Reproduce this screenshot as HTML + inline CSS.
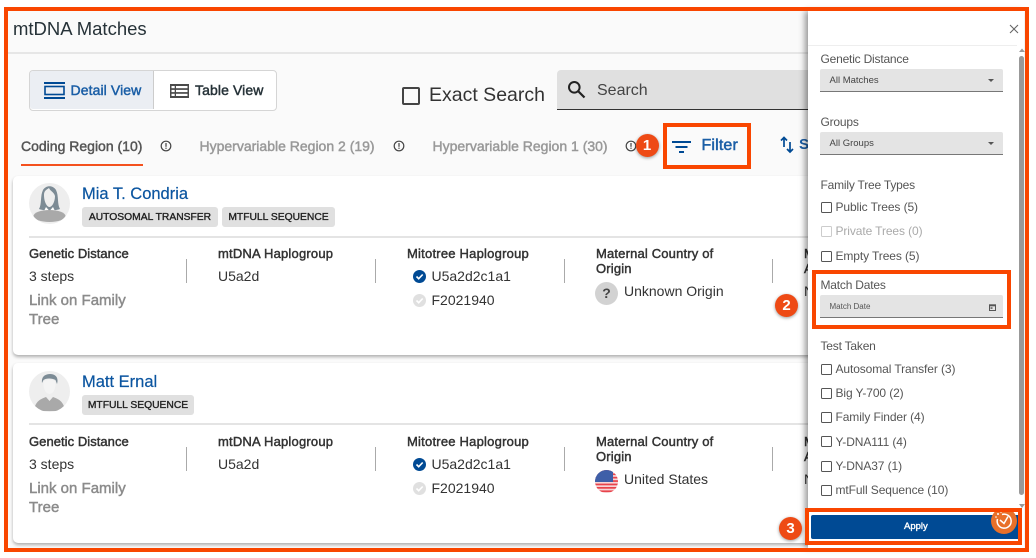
<!DOCTYPE html>
<html><head><meta charset="utf-8"><style>
html,body{margin:0;padding:0;background:#fff}
#p{position:relative;width:1036px;height:558px;overflow:hidden;background:#fff;font-family:"Liberation Sans",sans-serif;color:#212121}
#p div,#p svg,#p span.t{position:absolute}
.t{white-space:nowrap;line-height:1}
.lbl{font-size:13px;font-weight:400;color:#333;-webkit-text-stroke:.45px #333}
.val{font-size:14px;color:#333}
.sep{width:1px;height:24px;background:#aaa}
.chip{background:#e0e0e0;border-radius:3px;height:20px;font-size:10.3px;line-height:22px;color:#222;text-align:center;-webkit-text-stroke:.35px #222}
.card{background:#fff;border-radius:5px;box-shadow:0 2px 3px rgba(0,0,0,.3)}
.ph{font-size:12px;color:#555;letter-spacing:-.2px}
.cb{width:9px;height:9px;border:1.4px solid #555;border-radius:1.5px;background:#fff}
.ct{font-size:12px;color:#555;letter-spacing:-.1px}
.or{position:absolute;border:4px solid #f94600;box-sizing:border-box}
.num{width:23px;height:23px;border-radius:50%;background:#ee4a15;color:#fff;font-weight:700;font-size:15px;line-height:23px;text-align:center;box-shadow:0 1px 3px rgba(0,0,0,.4)}
.sel{left:820px;width:183px;height:22px;background:#e4e4e4;border-bottom:1.5px solid #777;border-radius:2px 2px 0 0}
.lnk{left:29px;font-size:15px;color:#8b8b8b;line-height:19px;white-space:normal;width:110px;-webkit-text-stroke:.45px #8b8b8b}
.tab{font-size:14px;-webkit-text-stroke:.45px currentColor}
</style></head><body><div id="p">

<div style="left:8px;top:11px;width:1016px;height:537px;background:#fafafa"></div>
<span class="t" style="left:13px;top:20px;font-size:18.5px;color:#263238">mtDNA Matches</span>
<div style="left:8px;top:52px;width:800px;height:2px;background:#e6e6e6"></div>

<!-- toggle -->
<div style="left:29px;top:70px;width:246px;height:39px;background:#fff;border:1px solid #d5d5d5;border-radius:4px"></div>
<div style="left:30px;top:71px;width:123px;height:38px;background:#ebeef3;border-right:1px solid #ccc;border-radius:3px 0 0 3px"></div>
<svg style="left:44px;top:82px" width="21" height="17" viewBox="0 0 21 17"><rect x="0" y="0" width="21" height="2" fill="#004a94"/><rect x="1" y="4.5" width="19" height="8" fill="none" stroke="#004a94" stroke-width="1.6"/><rect x="0" y="15" width="21" height="2" fill="#004a94"/></svg>
<span class="t" style="left:70.5px;top:83px;font-size:14px;color:#1a5ea6;letter-spacing:.1px;-webkit-text-stroke:.45px #1a5ea6">Detail View</span>
<svg style="left:170px;top:84px" width="19" height="14" viewBox="0 0 19 14"><rect width="19" height="14" fill="#4a4a4a"/><g fill="#fff"><rect x="6" y="2" width="11.5" height="2.2"/><rect x="6" y="5.9" width="11.5" height="2.2"/><rect x="6" y="9.8" width="11.5" height="2.2"/><rect x="1.5" y="2" width="3.2" height="2.2"/><rect x="1.5" y="5.9" width="3.2" height="2.2"/><rect x="1.5" y="9.8" width="3.2" height="2.2"/></g></svg>
<span class="t" style="left:195px;top:83px;font-size:14px;color:#263238;letter-spacing:.1px;-webkit-text-stroke:.45px #263238">Table View</span>

<!-- exact search -->
<div style="left:402px;top:87px;width:14px;height:14px;border:2px solid #444;border-radius:2px"></div>
<span class="t" style="left:429px;top:86px;font-size:19.5px;color:#333">Exact Search</span>
<div style="left:557px;top:70px;width:251px;height:39px;background:#e0e0e0;border-bottom:1px solid #333;border-radius:4px 0 0 0"></div>
<svg style="left:567px;top:80px" width="19" height="19" viewBox="0 0 19 19"><circle cx="7.3" cy="7.3" r="5.3" fill="none" stroke="#222" stroke-width="2"/><path d="M11.5 11.5L17.5 17.5" stroke="#222" stroke-width="2.2"/></svg>
<span class="t" style="left:597px;top:83px;font-size:16px;color:#444">Search</span>

<!-- tabs -->
<span class="t tab" style="left:21px;top:139px;color:#555">Coding Region (10)</span>
<div style="left:21px;top:164px;width:122px;height:2px;background:#f4511e"></div>
<span class="t tab" style="left:199.500px;top:139px;color:#999">Hypervariable Region 2 (19)</span>
<span class="t tab" style="left:432.500px;top:139px;color:#999">Hypervariable Region 1 (30)</span>
<svg style="left:160px;top:140px" width="12" height="12" viewBox="0 0 12 12"><circle cx="6" cy="6" r="4.8" fill="none" stroke="#444" stroke-width="1.2"/><rect x="5.4" y="3" width="1.2" height="3.8" fill="#444"/><rect x="5.4" y="7.6" width="1.2" height="1.3" fill="#444"/></svg>
<svg style="left:393px;top:140px" width="12" height="12" viewBox="0 0 12 12"><circle cx="6" cy="6" r="4.8" fill="none" stroke="#444" stroke-width="1.2"/><rect x="5.4" y="3" width="1.2" height="3.8" fill="#444"/><rect x="5.4" y="7.6" width="1.2" height="1.3" fill="#444"/></svg>
<svg style="left:625px;top:140px" width="12" height="12" viewBox="0 0 12 12"><circle cx="6" cy="6" r="4.8" fill="none" stroke="#444" stroke-width="1.2"/><rect x="5.4" y="3" width="1.2" height="3.8" fill="#444"/><rect x="5.4" y="7.6" width="1.2" height="1.3" fill="#444"/></svg>

<!-- filter + sort -->
<svg style="left:672px;top:141px" width="19" height="12" viewBox="0 0 19 12"><rect x="0" y="0" width="19" height="2" fill="#004a94"/><rect x="3.5" y="5" width="12" height="2" fill="#004a94"/><rect x="7" y="10" width="5" height="2" fill="#004a94"/></svg>
<span class="t" style="left:701.500px;top:138px;font-size:16px;color:#1a5ea6;letter-spacing:.15px;-webkit-text-stroke:.5px #1a5ea6">Filter</span>
<svg style="left:780px;top:136px" width="14" height="18" viewBox="0 0 14 18"><path d="M4 1.5V11M1 4.5L4 1.5L7 4.5M10 6V16M7 13L10 16L13 13" fill="none" stroke="#004a94" stroke-width="1.7"/></svg>
<span class="t" style="left:799px;top:137px;font-size:15px;font-weight:700;color:#1a5ea6">S</span>

<!-- card 1 -->
<div class="card" style="left:13px;top:176px;width:810px;height:179px"></div>
<div style="left:29px;top:183px;width:41px;height:41px;border-radius:50%;background:#eee;overflow:hidden">
<svg style="left:0;top:0" width="41" height="41" viewBox="0 0 41 41"><path d="M10 26C13 21 11 13 14 7C17 2 24 2 27 7C30 13 28 21 31 26C26 28 15 28 10 26Z" fill="#7c8b95"/><path d="M15 12C15 8 17 7 20 5C21 8 25 9 26 13C26 19 23 24 20.500 24C18 24 15 19 15 12Z" fill="#eee"/><path d="M17 24L20.500 28L24 24L26 28H15Z" fill="#fff"/><ellipse cx="20.500" cy="33" rx="16" ry="6" fill="#a9a9a9"/></svg></div>
<span class="t" style="left:82px;top:186px;font-size:16.500px;color:#0b55a0;-webkit-text-stroke:.2px #0b55a0">Mia T. Condria</span>
<div class="chip" style="left:82px;top:207px;width:136px">AUTOSOMAL TRANSFER</div>
<div class="chip" style="left:222px;top:207px;width:113px">MTFULL SEQUENCE</div>
<div style="left:29px;top:236px;width:780px;height:2px;background:#e4e4e4"></div>
<span class="t lbl" style="left:29px;top:247px;letter-spacing:.05px">Genetic Distance</span>
<span class="t val" style="left:29px;top:269px">3 steps</span>
<span class="t lnk" style="top:291px">Link on Family Tree</span>
<div class="sep" style="left:186px;top:259px"></div>
<span class="t lbl" style="left:218px;top:247px;letter-spacing:.2px">mtDNA Haplogroup</span>
<span class="t val" style="left:218px;top:269px">U5a2d</span>
<div class="sep" style="left:375px;top:259px"></div>
<span class="t lbl" style="left:407px;top:247px;letter-spacing:.22px">Mitotree Haplogroup</span>
<svg style="left:413px;top:270px" width="13" height="13" viewBox="0 0 13 13"><circle cx="6.500" cy="6.500" r="6.500" fill="#004a94"/><path d="M3.500 6.500L5.700 8.700L9.700 4.500" fill="none" stroke="#fff" stroke-width="1.6"/></svg>
<span class="t val" style="left:431.500px;top:269px">U5a2d2c1a1</span>
<svg style="left:413px;top:294px" width="13" height="13" viewBox="0 0 13 13"><circle cx="6.500" cy="6.500" r="6.500" fill="#e0e0e0"/><path d="M3.500 6.500L5.700 8.700L9.700 4.500" fill="none" stroke="#fff" stroke-width="1.6"/></svg>
<span class="t val" style="left:431.500px;top:293px">F2021940</span>
<div class="sep" style="left:564px;top:259px"></div>
<span class="t lbl" style="left:596px;top:247px;letter-spacing:.17px">Maternal Country of</span>
<span class="t lbl" style="left:596px;top:262px;letter-spacing:.17px">Origin</span>
<div style="left:595px;top:282px;width:23px;height:23px;border-radius:50%;background:#d2d2d2;color:#444;font-size:14px;font-weight:700;line-height:23px;text-align:center">?</div>
<span class="t val" style="left:624px;top:284px">Unknown Origin</span>
<div class="sep" style="left:772px;top:259px"></div>
<span class="t lbl" style="left:804px;top:247px">M</span>
<span class="t lbl" style="left:804px;top:262px">A</span>
<span class="t val" style="left:804px;top:284px">N</span>

<!-- card 2 -->
<div class="card" style="left:13px;top:363px;width:810px;height:180px"></div>
<div style="left:29px;top:371px;width:41px;height:41px;border-radius:50%;background:#eee;overflow:hidden">
<svg style="left:0;top:0" width="41" height="41" viewBox="0 0 41 41"><path d="M13 12C12 5 17 3 21 3C26 3 30 6 28 13L26.500 9C23 7 17 7 14.500 9Z" fill="#7c8b95"/><path d="M14.500 11C15 8 26 8 26.500 11C27 18 24 23 20.500 23C17 23 14 18 14.500 11Z" fill="#f4f4f4"/><path d="M5 40C6 30 12 28 17 26L20.500 30L24 26C29 28 35 30 36 40Z" fill="#a9a9a9"/></svg></div>
<span class="t" style="left:82px;top:374px;font-size:16.500px;color:#0b55a0;-webkit-text-stroke:.2px #0b55a0">Matt Ernal</span>
<div class="chip" style="left:82px;top:395px;width:112px">MTFULL SEQUENCE</div>
<div style="left:29px;top:423px;width:780px;height:2px;background:#e4e4e4"></div>
<span class="t lbl" style="left:29px;top:435px;letter-spacing:.05px">Genetic Distance</span>
<span class="t val" style="left:29px;top:457px">3 steps</span>
<span class="t lnk" style="top:479px">Link on Family Tree</span>
<div class="sep" style="left:186px;top:447px"></div>
<span class="t lbl" style="left:218px;top:435px;letter-spacing:.2px">mtDNA Haplogroup</span>
<span class="t val" style="left:218px;top:457px">U5a2d</span>
<div class="sep" style="left:375px;top:447px"></div>
<span class="t lbl" style="left:407px;top:435px;letter-spacing:.22px">Mitotree Haplogroup</span>
<svg style="left:413px;top:458px" width="13" height="13" viewBox="0 0 13 13"><circle cx="6.500" cy="6.500" r="6.500" fill="#004a94"/><path d="M3.500 6.500L5.700 8.700L9.700 4.500" fill="none" stroke="#fff" stroke-width="1.6"/></svg>
<span class="t val" style="left:431.500px;top:457px">U5a2d2c1a1</span>
<svg style="left:413px;top:482px" width="13" height="13" viewBox="0 0 13 13"><circle cx="6.500" cy="6.500" r="6.500" fill="#e0e0e0"/><path d="M3.500 6.500L5.700 8.700L9.700 4.500" fill="none" stroke="#fff" stroke-width="1.6"/></svg>
<span class="t val" style="left:431.500px;top:481px">F2021940</span>
<div class="sep" style="left:564px;top:447px"></div>
<span class="t lbl" style="left:596px;top:435px;letter-spacing:.17px">Maternal Country of</span>
<span class="t lbl" style="left:596px;top:450px;letter-spacing:.17px">Origin</span>
<svg style="left:595px;top:470px" width="23" height="23" viewBox="0 0 23 23"><defs><clipPath id="c"><circle cx="11.500" cy="11.500" r="11.500"/></clipPath></defs><g clip-path="url(#c)"><rect width="23" height="23" fill="#f7d5d7"/><g fill="#e8434b"><rect y="0" width="23" height="1.700"/><rect y="3.400" width="23" height="1.700"/><rect y="6.800" width="23" height="1.700"/><rect y="10.200" width="23" height="1.700"/><rect y="13.600" width="23" height="1.700"/><rect y="17" width="23" height="1.700"/><rect y="20.400" width="23" height="1.700"/></g><rect width="18" height="12" fill="#3f5fa8"/></g></svg>
<span class="t val" style="left:624px;top:472px">United States</span>
<div class="sep" style="left:772px;top:447px"></div>
<span class="t lbl" style="left:804px;top:435px">M</span>
<span class="t lbl" style="left:804px;top:450px">A</span>
<span class="t val" style="left:804px;top:472px">N</span>

<!-- drawer -->
<div style="left:808px;top:11px;width:216px;height:537px;background:#fff;box-shadow:-3px 0 6px rgba(0,0,0,.4)"></div>
<svg style="left:1009px;top:24px" width="10" height="10" viewBox="0 0 10 10"><path d="M1 1L9 9M9 1L1 9" stroke="#666" stroke-width="1.100"/></svg>
<div style="left:808px;top:45px;width:209px;height:1px;background:#eee"></div>
<div style="left:1019px;top:56px;width:5px;height:439px;background:#999;border-radius:3px"></div>
<svg style="left:1018.500px;top:48px" width="6" height="5" viewBox="0 0 6 5"><path d="M0 4L3 0.500L6 4Z" fill="#999"/></svg>
<svg style="left:1018.500px;top:504px" width="6" height="4" viewBox="0 0 6 4"><path d="M0 0L3 4L6 0Z" fill="#999"/></svg>

<span class="t ph" style="left:820.500px;top:53px">Genetic Distance</span>
<div class="sel" style="top:69px"></div>
<span class="t" style="left:829.500px;top:76px;font-size:9.500px;color:#444">All Matches</span>
<svg style="left:988px;top:79px" width="6" height="3" viewBox="0 0 6 3"><path d="M0 0H6L3 3Z" fill="#555"/></svg>

<span class="t ph" style="left:820.500px;top:116px">Groups</span>
<div class="sel" style="top:132px"></div>
<span class="t" style="left:829.500px;top:139px;font-size:9.500px;color:#444">All Groups</span>
<svg style="left:988px;top:142px" width="6" height="3" viewBox="0 0 6 3"><path d="M0 0H6L3 3Z" fill="#555"/></svg>

<span class="t ph" style="left:820.500px;top:179px">Family Tree Types</span>
<div class="cb" style="left:821px;top:202px"></div><span class="t ct" style="left:835.500px;top:201px">Public Trees (5)</span>
<div class="cb" style="left:821px;top:226px;border-color:#ccc"></div><span class="t ct" style="left:835.500px;top:225px;color:#aaa">Private Trees (0)</span>
<div class="cb" style="left:821px;top:251px"></div><span class="t ct" style="left:835.500px;top:249.500px">Empty Trees (5)</span>

<span class="t ph" style="left:820.500px;top:279px">Match Dates</span>
<div class="sel" style="top:295px"></div>
<span class="t" style="left:829.500px;top:302.500px;font-size:8px;color:#555">Match Date</span>
<svg style="left:989px;top:304px" width="7" height="7" viewBox="0 0 7 7"><rect x=".5" y=".8" width="6" height="5.700" fill="none" stroke="#555"/><rect x=".5" y=".8" width="6" height="1.500" fill="#555"/><rect x="1.500" y="3.300" width="2" height="1.500" fill="#555"/></svg>

<span class="t ph" style="left:820.500px;top:340px">Test Taken</span>
<div class="cb" style="left:821px;top:364px"></div><span class="t ct" style="left:835.500px;top:363px">Autosomal Transfer (3)</span>
<div class="cb" style="left:821px;top:388px"></div><span class="t ct" style="left:835.500px;top:387px">Big Y-700 (2)</span>
<div class="cb" style="left:821px;top:412px"></div><span class="t ct" style="left:835.500px;top:411px">Family Finder (4)</span>
<div class="cb" style="left:821px;top:436px"></div><span class="t ct" style="left:835.500px;top:435.500px">Y-DNA111 (4)</span>
<div class="cb" style="left:821px;top:461px"></div><span class="t ct" style="left:835.500px;top:460px">Y-DNA37 (1)</span>
<div class="cb" style="left:821px;top:485px"></div><span class="t ct" style="left:835.500px;top:484px">mtFull Sequence (10)</span>

<div style="left:811px;top:515px;width:210px;height:24px;background:#004a94;border-radius:2px"></div>
<span class="t" style="left:904px;top:521.500px;font-size:9.500px;color:#fff;-webkit-text-stroke:.35px #fff">Apply</span>
<div style="left:991px;top:508px;width:26px;height:26px;border-radius:50%;background:#e8702a"></div>
<svg style="left:994px;top:511px" width="20" height="20" viewBox="0 0 20 20"><path d="M8 3.500A7 7 0 1 1 3.500 8" fill="none" stroke="#fff" stroke-width="1.500"/><path d="M6 9L10 12.500L14 5.500" fill="none" stroke="#fff" stroke-width="1.500"/><circle cx="4" cy="3" r="1" fill="#fff"/><circle cx="7" cy="1" r=".8" fill="#fff"/><circle cx="2" cy="6" r=".8" fill="#fff"/></svg>

<!-- orange annotations -->
<div class="or" style="left:4px;top:7px;width:1025px;height:545px"></div>
<div class="or" style="left:663px;top:123px;width:88px;height:46px"></div>
<div class="or" style="left:812px;top:270px;width:199px;height:59px"></div>
<div class="or" style="left:805px;top:508px;width:217px;height:37px"></div>
<div class="num" style="left:635.500px;top:133.500px">1</div>
<div class="num" style="left:775px;top:294px">2</div>
<div class="num" style="left:779px;top:517px">3</div>
</div></body></html>
